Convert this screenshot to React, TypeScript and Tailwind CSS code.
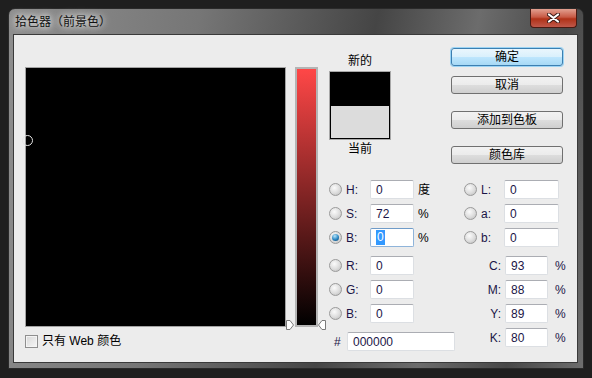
import React from 'react';
import clsx from 'clsx';

const font = "font-['Liberation_Sans','Noto_Sans_CJK_SC',sans-serif]";

function Radio({ checked }: { checked?: boolean }) {
  return (
    <span className="flex h-[13px] w-[13px] shrink-0 items-center justify-center rounded-full border border-[#9a9a9a] bg-[radial-gradient(circle_at_40%_35%,#fbfbfb,#dcdcdc_55%,#b8b8b8)]">
      {checked && (
        <span className="h-[7px] w-[7px] rounded-full bg-[radial-gradient(circle_at_40%_30%,#b8e6fb,#2a86c2_55%,#0b3b62)]" />
      )}
    </span>
  );
}

function Field({ value, className, focused }: { value: string; className: string; focused?: boolean }) {
  return (
    <div
      className={clsx(
        'flex h-[19px] shrink-0 items-center rounded-[2px] border bg-white pl-[5px] text-[12px] text-[#1b1547]',
        focused ? 'border-[#8fb4da] border-t-[#6f9bc8]' : 'border-[#dcdfe3] border-t-[#abadb3]',
        className
      )}
    >
      {focused ? <span className="bg-[#3399ff] px-[1px] leading-[15px] text-white">{value}</span> : value}
    </div>
  );
}

function Button({ label, primary }: { label: string; primary?: boolean }) {
  return (
    <div
      className={clsx(
        'flex h-[18px] w-[112px] items-center justify-center rounded-[3px] border text-[12px] text-black',
        primary
          ? 'border-[#3c7fb1] bg-[linear-gradient(#eaf6fd_0%,#d9f0fc_50%,#bee6fd_51%,#a7d9f5_100%)] shadow-[0_0_0_1px_#9cd4f4]'
          : 'border-[#707070] bg-[linear-gradient(#f2f2f2_0%,#ebebeb_50%,#dddddd_51%,#cfcfcf_100%)]'
      )}
    >
      {label}
    </div>
  );
}

function Triangle({ dir }: { dir: 'left' | 'right' }) {
  const pts = dir === 'right' ? '0.5,0.5 4,0.5 7.5,5 4,9.5 0.5,9.5' : '8.5,0.5 5,0.5 1.5,5 5,9.5 8.5,9.5';
  return (
    <svg width={dir === 'right' ? 8 : 9} height="10" viewBox={dir === 'right' ? '0 0 8 10' : '0 0 9 10'}>
      <polygon points={pts} fill="#ffffff" stroke="#7a7a7a" strokeWidth="1" />
    </svg>
  );
}

function LeftRow({ k, v, unit, checked, focused }: { k: string; v: string; unit?: string; checked?: boolean; focused?: boolean }) {
  return (
    <div className="flex h-[19px] items-center">
      <Radio checked={checked} />
      <span className="ml-[4px] w-[24px] text-[12px] text-[#1b1547]">{k}</span>
      <Field value={v} className="w-[44px]" focused={focused} />
      {unit && <span className="ml-[4px] text-[12px] text-black">{unit}</span>}
    </div>
  );
}

function LabRow({ k, v }: { k: string; v: string }) {
  return (
    <div className="flex h-[19px] items-center">
      <Radio />
      <span className="ml-[4px] w-[23px] text-[12px] text-[#1b1547]">{k}</span>
      <Field value={v} className="w-[55px]" />
    </div>
  );
}

function CmykRow({ k, v }: { k: string; v: string }) {
  return (
    <div className="flex h-[19px] items-center">
      <span className="w-[37px] text-right text-[12px] text-[#1b1547]">{k}</span>
      <Field value={v} className="ml-[4px] w-[43px]" />
      <span className="ml-[7px] text-[12px] text-[#1b1547]">%</span>
    </div>
  );
}

export default function App() {
  return (
    <div className={clsx('h-[378px] w-[592px] bg-[#1f1f1f] pl-[8px] pt-[8px]', font)}>
      <div className="flex h-[361px] w-[576px] flex-col rounded-t-[7px] border border-[#2a2a2a] bg-[linear-gradient(100deg,#8e8e8e_0%,#767676_30%,#454545_58%,#6c6c6c_74%,#474747_88%,#6e6e6e_100%)]">
        {/* title bar */}
        <div className="flex h-[26px] items-start">
          <span className="ml-[6px] self-center text-[12px] leading-[14px] text-[#111] [text-shadow:0_0_6px_#ffffff,0_0_10px_#dddddd]">
            拾色器（前景色）
          </span>
          <div className="ml-auto mr-[6px] flex h-[19px] w-[47px] items-center justify-center rounded-b-[4px] border border-t-0 border-[#4a1a12] bg-[linear-gradient(#e2a090_0%,#c85a45_45%,#b03218_55%,#c0584a_100%)]">
            <svg width="13" height="10" viewBox="0 0 13 10">
              <path d="M2 1.5 L11 8.5 M11 1.5 L2 8.5" stroke="#3a1a16" strokeWidth="4" strokeLinecap="round" />
              <path d="M2 1.5 L11 8.5 M11 1.5 L2 8.5" stroke="#ffffff" strokeWidth="2.2" strokeLinecap="round" />
            </svg>
          </div>
        </div>

        {/* client area */}
        <div className="ml-[5px] flex h-[327px] w-[563px] items-start bg-[#ececec] pt-[13px] shadow-[0_0_0_1px_#3a3a3a]">
          {/* color field */}
          <div className="ml-[11px] mt-[19px] flex flex-col">
            <div className="relative h-[260px] w-[261px] border border-[#a3a3a3] bg-black">
              <span className="absolute left-[-4px] top-[67px] h-[11px] w-[11px] rounded-full border border-[#e4e4e4]" />
            </div>
            <div className="mt-[8px] flex h-[13px] items-center">
              <span className="h-[13px] w-[13px] border border-[#8f8f8f] bg-[linear-gradient(135deg,#d8d8d8,#f6f6f6)] shadow-[inset_0_0_0_1px_#f4f4f4]" />
              <span className="ml-[4px] text-[12px] leading-[13px] text-black">只有 Web 颜色</span>
            </div>
          </div>

          {/* brightness slider */}
          <div className="relative ml-[9px] mt-[19px] h-[260px] w-[23px] border-2 border-[#b4b4b4] bg-[linear-gradient(#ff4747,#000000)]">
            <span className="absolute left-[-11px] top-[251px] flex">
              <Triangle dir="right" />
            </span>
            <span className="absolute left-[20px] top-[251px] flex">
              <Triangle dir="left" />
            </span>
          </div>

          {/* right side */}
          <div className="ml-[11px] flex flex-col">
            <div className="flex h-[116px]">
              <div className="flex w-[62px] flex-col items-center pt-[6px]">
                <span className="text-[12px] leading-[14px] text-black">新的</span>
                <div className="mt-[3px] h-[69px] w-[62px] border border-[#a8a8a8]">
                  <div className="flex h-full flex-col border border-black">
                    <div className="h-[33px] bg-black" />
                    <div className="flex-1 bg-[#dcdcdc]" />
                  </div>
                </div>
                <span className="mt-[2px] text-[12px] leading-[14px] text-black">当前</span>
              </div>
              <div className="ml-[60px] flex flex-col">
                <Button label="确定" primary />
                <div className="mt-[10px]">
                  <Button label="取消" />
                </div>
                <div className="mt-[17px]">
                  <Button label="添加到色板" />
                </div>
                <div className="mt-[17px]">
                  <Button label="颜色库" />
                </div>
              </div>
            </div>

            <div className="mt-[16px] flex">
              <div className="flex w-[127px] flex-col">
                <div className="flex flex-col gap-[5px]">
                  <LeftRow k="H:" v="0" unit="度" />
                  <LeftRow k="S:" v="72" unit="%" />
                  <LeftRow k="B:" v="0" unit="%" checked focused />
                </div>
                <div className="mt-[9px] flex flex-col gap-[5px]">
                  <LeftRow k="R:" v="0" />
                  <LeftRow k="G:" v="0" />
                  <LeftRow k="B:" v="0" />
                </div>
                <div className="mt-[9px] flex h-[19px] items-center pl-[5px]">
                  <span className="w-[13px] text-[12px] text-[#1b1547]">#</span>
                  <Field value="000000" className="w-[108px]" />
                </div>
              </div>

              <div className="ml-[8px] flex flex-col">
                <div className="flex flex-col gap-[5px]">
                  <LabRow k="L:" v="0" />
                  <LabRow k="a:" v="0" />
                  <LabRow k="b:" v="0" />
                </div>
                <div className="mt-[9px] flex flex-col gap-[5px]">
                  <CmykRow k="C:" v="93" />
                  <CmykRow k="M:" v="88" />
                  <CmykRow k="Y:" v="89" />
                  <CmykRow k="K:" v="80" />
                </div>
              </div>
            </div>
          </div>
        </div>
      </div>
    </div>
  );
}
